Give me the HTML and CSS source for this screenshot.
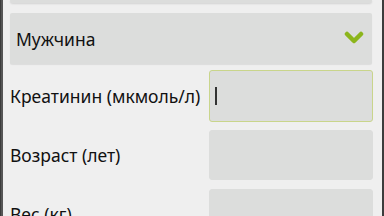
FILE: index.html
```html
<!DOCTYPE html>
<html lang="ru">
<head>
    <meta charset="UTF-8">
    <meta name="viewport" content="width=device-width, initial-scale=1.0">
    <title>Креатинин</title>
    <link rel="stylesheet" href="styles.css">
</head>
<body>
    <div class="screen">
        <div class="prev-field"></div>

        <!-- Пол -->
        <div class="select">
            <span>Мужчина</span>
            <svg class="chevron" width="20" height="14" viewBox="0 0 20 14">
                <polyline points="3,3 10,10 17,3" fill="none" stroke="#8cb51c" stroke-width="4.5" stroke-linecap="round" stroke-linejoin="round"/>
            </svg>
        </div>

        <div class="row">
            <label>Креатинин (мкмоль/л)</label>
            <div class="input focused"><span class="cursor"></span></div>
        </div>
        <div class="row">
            <label>Возраст (лет)</label>
            <div class="input"></div>
        </div>
        <div class="row">
            <label>Вес (кг)</label>
            <div class="input"></div>
        </div>
    </div>
</body>
</html>
```

FILE: styles.css
```css
body {
    margin: 0;
    background: #3c3c3c;
    font-family: 'Noto Sans', sans-serif;
    overflow: hidden;
}

.screen {
    margin: 0 2px 0 1px;
    border-left: 2px solid #555;
    background: #efefef;
    height: 216px;
    padding: 0 9px 0 7px;
    display: flex;
    flex-direction: column;
    gap: 6px;
    overflow: hidden;
}

.screen > * {
    flex-shrink: 0;
}

.prev-field {
    height: 3px;
    margin-right: 1px;
    background: #dcdddc;
    border-radius: 0 0 3px 3px;
    box-shadow: 0 1px 2px rgba(0,0,0,0.12);
    margin-bottom: 4px;
}

.select {
    height: 51px;
    margin-right: 1px;
    background: #dcdddc;
    border-radius: 2px;
    display: flex;
    align-items: center;
    justify-content: space-between;
    padding: 0 8px 0 6px;
    font-size: 17.5px;
    color: #111;
    box-shadow: 0 1px 1px rgba(0,0,0,0.08);
}

.chevron {
    margin-top: -2px;
}

.row {
    display: flex;
    align-items: center;
    justify-content: space-between;
    height: 52px;
}

.row label {
    font-size: 17.5px;
    color: #111;
    white-space: nowrap;
}

.input {
    width: 164px;
    height: 50px;
    background: #dcdddc;
    border-radius: 3px;
    border: 1px solid #dcdddc;
    display: flex;
    align-items: center;
    padding-left: 5px;
    box-sizing: border-box;
}

.input.focused {
    height: 52px;
    border: 1px solid #c9d58b;
}

.row + .row {
    margin-top: 1px;
}

.cursor {
    width: 1.5px;
    height: 18px;
    background: #333;
}
```
